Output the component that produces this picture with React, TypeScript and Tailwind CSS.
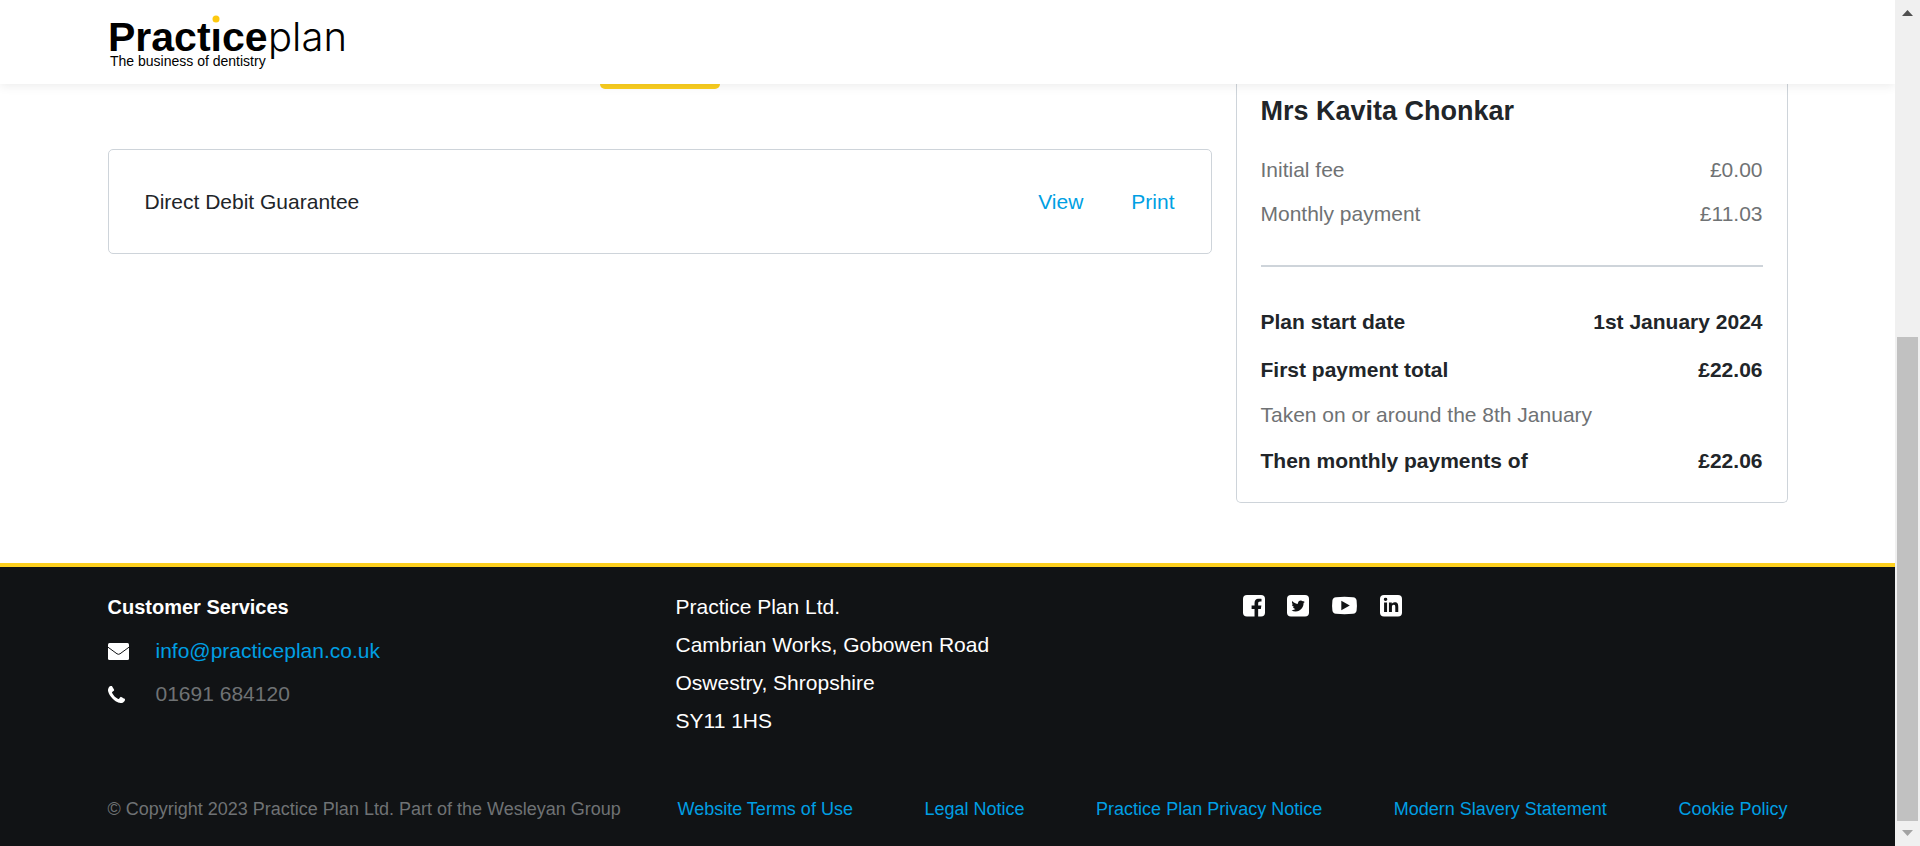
import type { ReactNode } from "react";
import { FaFacebookF, FaLinkedinIn, FaTwitter } from "react-icons/fa";

function Logo() {
  return (
    <a href="#home" aria-label="Practiceplan home">
      <svg width="250" height="64" viewBox="0 0 250 64" className="block">
        <text x="0" y="39" fontSize="41" fontWeight="700" fontFamily="'Liberation Sans', sans-serif">
          Practice
        </text>
        <text x="160" y="39" fontSize="40" fontWeight="300" fontFamily="Inter, Roboto, sans-serif">
          plan
        </text>
        <rect x="103" y="8" width="11" height="6" fill="#fff" />
        <circle cx="108" cy="7" r="3.5" fill="#fdc90f" />
        <text x="2" y="54" fontSize="14" fontFamily="'Liberation Sans', sans-serif">
          The business of dentistry
        </text>
      </svg>
    </a>
  );
}

function Row({ label, value, className }: { label: string; value?: string; className: string }) {
  return (
    <div className={`flex justify-between leading-6 ${className}`}>
      <dt>{label}</dt>
      {value && <dd>{value}</dd>}
    </div>
  );
}

function Envelope() {
  return (
    <svg width="21" height="17" viewBox="0 0 21 17" aria-hidden="true">
      <rect width="21" height="17" rx="1.5" fill="#fff" />
      <path d="M0 4.2 L9 10.8 Q10.5 11.8 12 10.8 L21 4.2" fill="none" stroke="#111315" strokeWidth="1" />
    </svg>
  );
}

function Phone() {
  return (
    <svg width="17" height="17" viewBox="0 0 1408 1408" fill="#fff" aria-hidden="true">
      <path d="M1408 1112q0 27-10 70.5t-21 68.5q-21 50-122 106-94 51-186 51-27 0-53-3.5t-57.5-12.5-47-14.5-55.5-20.5-49-18q-98-35-175-83-127-79-264-216t-216-264q-48-77-83-175-3-9-18-49t-20.5-55.5-14.5-47-12.5-57.5-3.5-53q0-92 51-186 56-101 106-122 25-11 68.5-21t70.5-10q14 0 21 3 18 6 53 76 11 19 30 54t35 63.5 31 53.5q3 4 17.5 25t21.5 35.5 7 28.5q0 20-28.5 50t-62 55-62 53-28.5 46q0 9 5 22.5t8.5 20.5 14 24 11.5 19q76 137 174 235t235 174q2 1 19 11.5t24 14 20.5 8.5 22.5 5q18 0 46-28.5t53-62 55-62 50-28.5q14 0 28.5 7t35.5 21.5 25 17.5q25 15 53.5 31t63.5 35 54 30q70 35 76 53 3 7 3 21z" />
    </svg>
  );
}

function Social({ label, children }: { label: string; children: ReactNode }) {
  return (
    <a href="#social" aria-label={label}>
      {children}
    </a>
  );
}

function Tile({ children }: { children: ReactNode }) {
  return (
    <svg width="22" height="22" viewBox="0 0 22 22" className="block">
      <rect width="22" height="21.5" rx="4" fill="#fff" />
      {children}
    </svg>
  );
}

function YouTubeIcon() {
  return (
    <svg width="27" height="22" viewBox="0 0 27 22" className="block">
      <path
        d="M5 2.3 Q13.5 1.3 22 2.3 Q25.2 2.6 25.6 5.5 Q26.2 10.5 25.6 15.5 Q25.2 18.4 22 18.8 Q13.5 19.6 5 18.8 Q1.8 18.4 1.4 15.5 Q0.8 10.5 1.4 5.5 Q1.8 2.6 5 2.3z"
        fill="#fff"
      />
      <path d="M10.3 5.8 L18.8 10.5 L10.3 15.3z" fill="#111315" />
    </svg>
  );
}

function ScrollRail() {
  return (
    <div aria-hidden="true" className="z-20 flex w-[25px] shrink-0 flex-col items-center bg-[#f0f0f0] py-2.5">
      <svg width="11" height="6" viewBox="0 0 11 6" className="shrink-0">
        <path d="M0 6 L5.5 0 L11 6z" fill="#505050" />
      </svg>
      <div className="h-[321px] shrink-0" />
      <div className="w-[21px] flex-1 bg-[#c1c1c1]" />
      <svg width="11" height="6" viewBox="0 0 11 6" className="mt-[9px] shrink-0">
        <path d="M0 0 L5.5 6 L11 0z" fill="#a3a3a3" />
      </svg>
    </div>
  );
}

const legalLinks = [
  "Website Terms of Use",
  "Legal Notice",
  "Practice Plan Privacy Notice",
  "Modern Slavery Statement",
  "Cookie Policy",
];

export default function App() {
  return (
    <div className="flex min-h-screen bg-white font-['Liberation_Sans',Arial,sans-serif] text-[21px] text-[#212529]">
      <div className="flex min-w-0 flex-1 flex-col">
        <header className="z-10 h-[84px] bg-white pt-3 shadow-[0_2px_10px_rgba(0,0,0,0.08)]">
          <div className="mx-auto max-w-[1680px]">
            <Logo />
          </div>
        </header>

        <main className="mx-auto flex w-full max-w-[1680px] items-start gap-6 pb-[60px]">
          <div className="min-w-0 flex-1">
            <div className="mx-auto h-[5px] w-[120px] rounded-b-[5px] bg-[#fbcf20]" />
            <section className="mt-[60px] flex h-[105px] items-center rounded-[5px] border border-[#ced4da] px-9">
              <p className="flex-1">Direct Debit Guarantee</p>
              <div className="flex gap-12 text-[#009fe3]">
                <a href="#view">View</a>
                <a href="#print">Print</a>
              </div>
            </section>
          </div>

          <aside className="w-[552px] rounded-b-[5px] border border-t-0 border-[#ced4da] px-6 pt-3 pb-[29px]">
            <h2 className="text-[27px] leading-[30px] font-bold">Mrs Kavita Chonkar</h2>
            <dl>
              <Row label="Initial fee" value="£0.00" className="mt-8 text-[#6f7274]" />
              <Row label="Monthly payment" value="£11.03" className="mt-5 text-[#6f7274]" />
              <div className="mt-[39px] h-0.5 bg-[#ced4da]" />
              <Row label="Plan start date" value="1st January 2024" className="mt-[43px] font-bold" />
              <Row label="First payment total" value="£22.06" className="mt-6 font-bold" />
              <Row label="Taken on or around the 8th January" className="mt-[21px] text-[#6f7274]" />
              <Row label="Then monthly payments of" value="£22.06" className="mt-[22px] font-bold" />
            </dl>
          </aside>
        </main>

        <footer className="flex-1 border-t-4 border-[#fdd01f] bg-[#111315] text-white">
          <div className="mx-auto max-w-[1680px] pt-[21px]">
            <div className="grid grid-cols-[568px_567px_1fr] leading-[38px]">
              <div>
                <h3 className="text-[20px] font-bold">Customer Services</h3>
                <ul className="mt-1.5 flex flex-col gap-[5px]">
                  <li className="flex items-center">
                    <span className="w-12">
                      <Envelope />
                    </span>
                    <a href="#email" className="text-[#009fe3]">info@practiceplan.co.uk</a>
                  </li>
                  <li className="flex items-center text-[#6f7274]">
                    <span className="w-12">
                      <Phone />
                    </span>
                    01691 684120
                  </li>
                </ul>
              </div>
              <address className="not-italic">
                Practice Plan Ltd.
                <br />
                Cambrian Works, Gobowen Road
                <br />
                Oswestry, Shropshire
                <br />
                SY11 1HS
              </address>
              <div className="flex h-[36px] items-center gap-[22px]">
                <Social label="Facebook">
                  <Tile><FaFacebookF size={18.5} x={4.3} y={3.5} color="#111315" /></Tile>
                </Social>
                <Social label="Twitter">
                  <Tile><FaTwitter size={13.5} x={4.4} y={4.2} color="#111315" /></Tile>
                </Social>
                <Social label="YouTube">
                  <YouTubeIcon />
                </Social>
                <Social label="LinkedIn">
                  <Tile><FaLinkedinIn size={16.5} x={2.8} y={2.6} color="#111315" /></Tile>
                </Social>
              </div>
            </div>
            <div className="mt-[57px] flex text-[18px] leading-6">
              <p className="w-[570px] shrink-0 text-[#6f7274]">
                © Copyright 2023 Practice Plan Ltd. Part of the Wesleyan Group
              </p>
              <nav className="flex flex-1 justify-between text-[#009fe3]">
                {legalLinks.map((label) => (
                  <a key={label} href="#legal">{label}</a>
                ))}
              </nav>
            </div>
          </div>
        </footer>
      </div>
      <ScrollRail />
    </div>
  );
}
